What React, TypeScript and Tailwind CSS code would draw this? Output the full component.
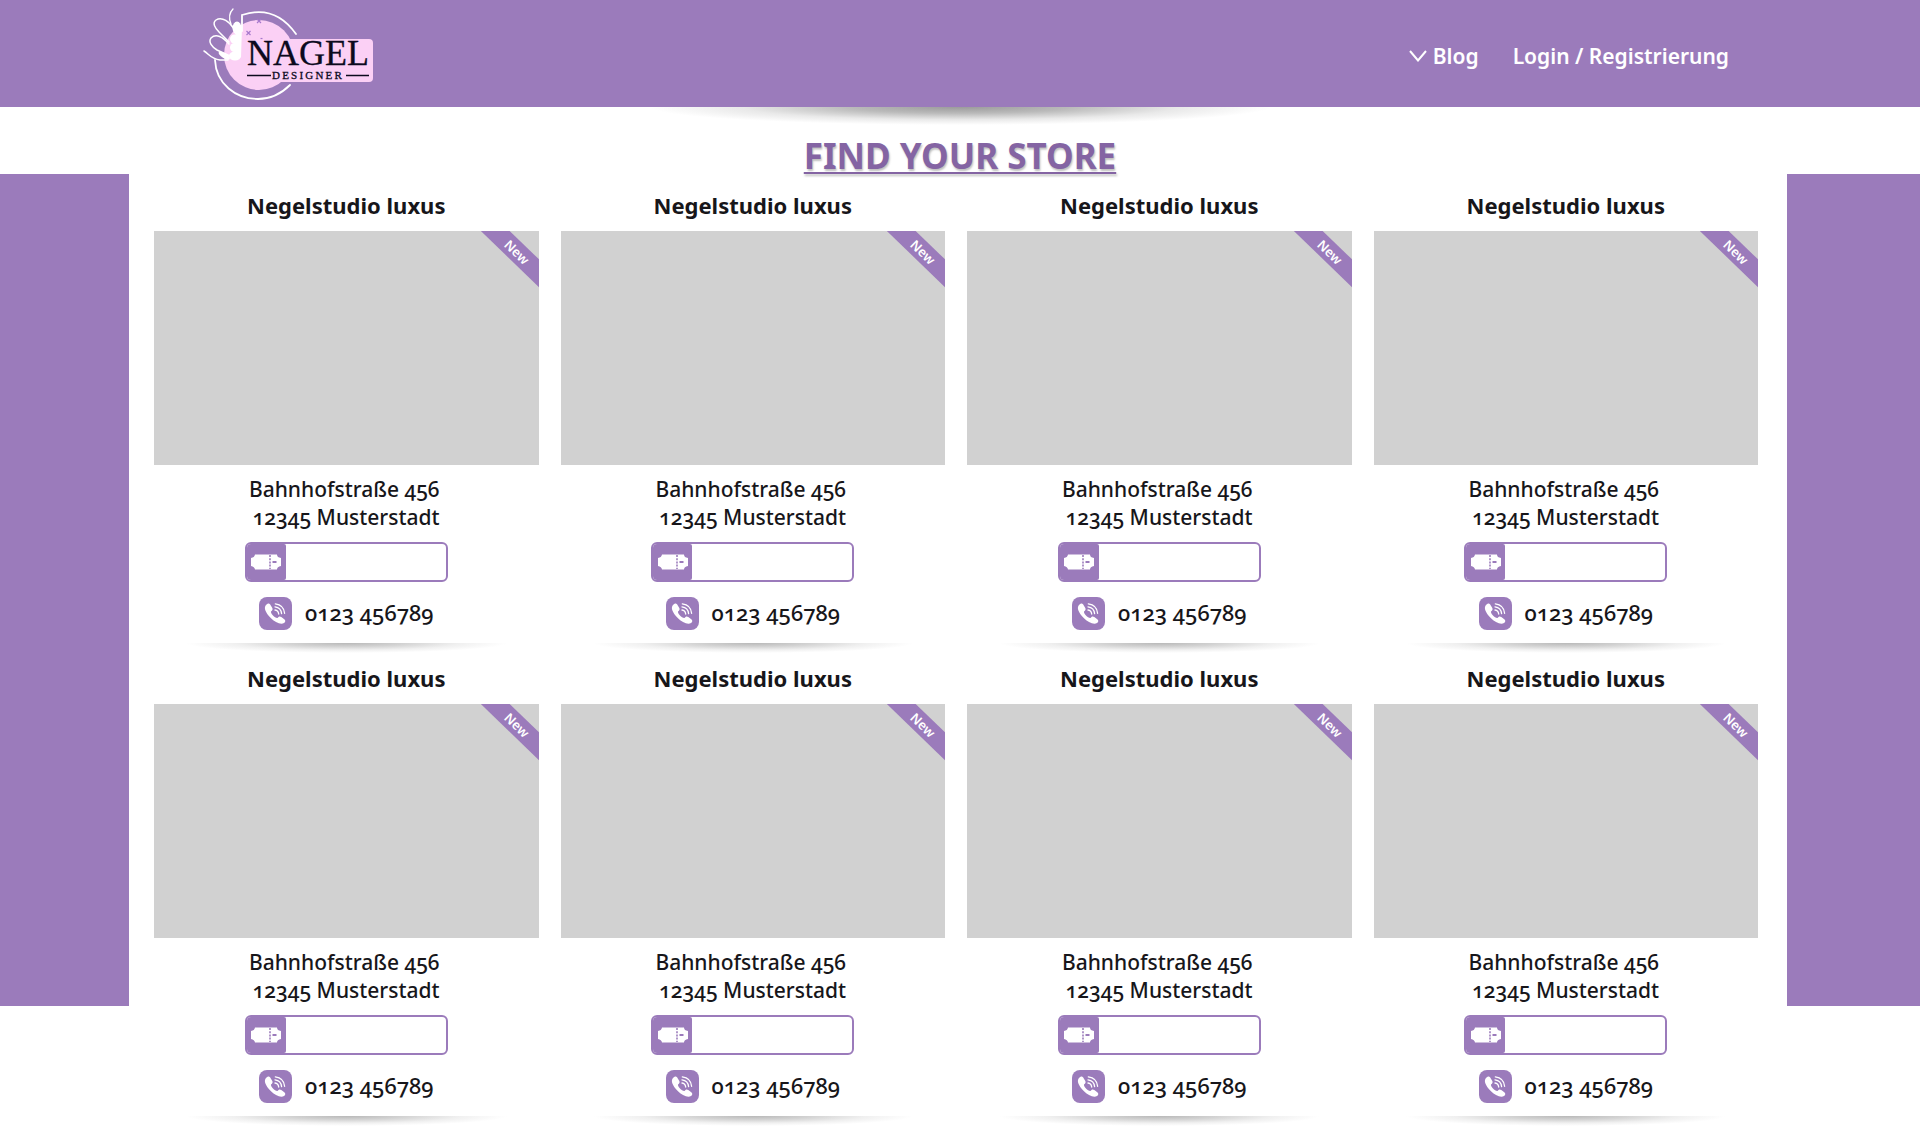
const stores = Array.from({ length: 8 }, (_, i) => ({
  id: i,
  name: "Negelstudio luxus",
  street: "Bahnhofstraße 456",
  city: "12345 Musterstadt",
  phone: "0123 456789",
}));

function Logo() {
  return (
    <svg viewBox="0 0 200 107" className="h-[107px] w-[200px]" role="img" aria-label="Nagel Designer">
      <circle cx="69" cy="55" r="35" fill="#fbd0f5" />
      <rect x="80" y="39" width="103" height="43" rx="4" fill="#fbd0f5" />
      <g fill="none" stroke="#fff" strokeWidth="1.8" strokeLinecap="round">
        <path d="M52 31 V15 Q85 4 106 34" />
        <path d="M25 60 C26 84 46 99 68 99 C81 99 91 94 100 85" />
        <path d="M43 9 C38 14 39 19 41 24" strokeWidth="1.300" />
        <path d="M44 29 C40 22 32 16 26 20 C22 23 25 28 29 32 L39 42" strokeWidth="1.500" />
        <path d="M39 44 C33 37 26 33 21 38 C18 42 22 47 27 50 L40 56" strokeWidth="1.500" />
        <path d="M14 51 C19 54 21 59 30 60 L38 60" strokeWidth="1.500" />
      </g>
      <g fill="#fff">
        <ellipse cx="47" cy="28" rx="4.500" ry="6.500" />
        <path d="M46 29 L52 27 L51 57 L43 60 Z" />
        <circle cx="44.500" cy="39" r="4.500" />
        <circle cx="44.500" cy="47.500" r="4.500" />
        <ellipse cx="45" cy="56" rx="6" ry="4.500" />
        <ellipse cx="34" cy="55.500" rx="6.500" ry="2.500" transform="rotate(32 34 56)" />
      </g>
      <g stroke="#a678cc" strokeWidth="1.200">
        <path d="M67 19 l4 4 m0 -4 l-4 4" />
        <path d="M56.500 31 l4 4 m0 -4 l-4 4" />
        <path d="M70.500 38.500 h2" />
      </g>
      <path d="M57 75.500 H81 M156 75.500 H179" stroke="#0c0a1e" strokeWidth="1.500" />
      <text fill="#0c0a1e" stroke="#0c0a1e" strokeWidth="0.300" className="font-['Liberation_Serif',serif]">
        <tspan x="57" y="65" fontSize="36">NAGEL</tspan>
        <tspan x="82" y="79" fontSize="11" className="tracking-[0.2em]">DESIGNER</tspan>
      </text>
    </svg>
  );
}

function TicketIcon() {
  return (
    <svg viewBox="0 0 32 16" className="h-4 w-8" aria-hidden="true">
      <path
        d="M5 0.500 H27 Q27 3.500 31 4 V12 Q27 12.500 27 15.500 H5 Q4.500 12.500 1 12 V4 Q4.500 3.500 5 0.500 Z"
        fill="#fff"
      />
      <path d="M20 1 V15" stroke="#9b7bbb" strokeWidth="1.600" strokeDasharray="2 1.200" />
      <path d="M22.500 8 H26.500" stroke="#9b7bbb" strokeWidth="2" />
    </svg>
  );
}

function PhoneIcon() {
  return (
    <svg viewBox="0 0 33 33" className="size-[33px]" aria-hidden="true">
      <rect width="33" height="33" rx="8" fill="#9b7bbb" />
      <path
        d="M7.500 7.500 C9 6 10.500 6.200 11.500 8 L13.300 11 C14 12.500 13.500 13.300 12 14.600 C11.600 17 16 21.300 18.500 21 C19.600 19.300 20.800 19 22.300 20 L25.300 22.300 C26.800 23.600 26.500 25 25 26 C22 28.200 16 25.500 11.500 20.800 C7 16 3.800 10.800 7.500 7.500 Z"
        fill="#fff"
      />
      <g fill="none" stroke="#fff" strokeWidth="1.300" strokeLinecap="round">
        <path d="M16 13 Q19.300 13.400 19.700 17" />
        <path d="M16 9.800 Q22 10.500 22.600 16.600" />
        <path d="M16.300 6.800 Q25 8 25.600 16.300" />
      </g>
    </svg>
  );
}

function StoreCard({ id, name, street, city, phone }: (typeof stores)[number]) {
  const codeId = `code-${id}`;
  return (
    <article className="relative flex flex-col items-center pb-[13px]">
      <h2 className="pt-[17px] pb-3 text-[22px] leading-7 font-bold">{name}</h2>
      <div className="relative h-[234px] w-full overflow-hidden bg-[#d1d1d1]">
        <span className="absolute top-[11px] -right-[31px] w-[106px] rotate-[44deg] bg-[#9b7bbb] text-center text-[13px] leading-5 font-semibold text-white">
          New
        </span>
      </div>
      <address className="pt-[10px] pr-1 text-right text-[21px] leading-7 font-medium not-italic oldstyle-nums">
        {street}
        <br />
        {city}
      </address>
      <div className="mt-[11px] flex h-10 w-[203px] overflow-hidden rounded-md border-2 border-[#9b7bbb] bg-white">
        <label htmlFor={codeId} aria-label="Gutscheincode" className="flex w-[39px] shrink-0 items-center justify-center rounded-r-xs bg-[#9b7bbb]">
          <TicketIcon />
        </label>
        <input id={codeId} type="text" className="min-w-0 flex-1 px-2 text-base outline-none" />
      </div>
      <a href="tel:0123456789" className="mt-[15px] flex h-[33px] items-start gap-[13px] text-[22px] leading-[30px] font-medium oldstyle-nums">
        <PhoneIcon />
        {phone}
      </a>
      <div className="absolute inset-x-8 top-full h-[10px] bg-[radial-gradient(ellipse_50%_100%_at_50%_0%,#b8b8b8_0%,#d2d2d2_35%,#f0f0f0_70%,#ffffff_100%)]" />
    </article>
  );
}

export default function App() {
  return (
    <div className="min-h-screen bg-white font-['Noto_Sans',sans-serif] text-[#17161a]">
      <header className="flex items-center justify-between bg-[#9b7bbb] pr-[191px] pl-[190px]">
        <a href="#">
          <Logo />
        </a>
        <nav className="flex items-center gap-[34px] pt-[5px] text-[21px] leading-8 font-semibold text-white">
          <a href="#blog" className="flex items-center gap-[6px]">
            <svg viewBox="0 0 18 12" className="h-3 w-[18px]" fill="none" stroke="#fff" strokeWidth="2" aria-hidden="true">
              <path d="M1 1 L9 10.500 L17 1" />
            </svg>
            Blog
          </a>
          <a href="#login">Login / Registrierung</a>
        </nav>
      </header>

      <div className="relative flex h-[67px] justify-center">
        <div className="absolute top-0 h-[18px] w-[620px] bg-[radial-gradient(ellipse_50%_100%_at_50%_0%,#9b9b9b_0%,#bababa_35%,#e9e9e9_70%,#ffffff_100%)]" />
        <h1 className="relative pt-[25px] text-[35px] leading-[48px] font-bold text-[#8464a3] underline decoration-2 underline-offset-[3px] text-shadow-[1px_2px_2px_rgba(0,0,0,0.25)] [text-decoration-skip-ink:none]">
          FIND YOUR STORE
        </h1>
      </div>

      <main className="flex items-start">
        <aside className="h-[832px] w-[129px] shrink-0 bg-[#9b7bbb]" />
        <section className="grid flex-1 grid-cols-4 gap-x-[22px] gap-y-1 pr-[29px] pl-[25px]">
          {stores.map((store) => (
            <StoreCard key={store.id} {...store} />
          ))}
        </section>
        <aside className="h-[832px] w-[133px] shrink-0 bg-[#9b7bbb]" />
      </main>
    </div>
  );
}
